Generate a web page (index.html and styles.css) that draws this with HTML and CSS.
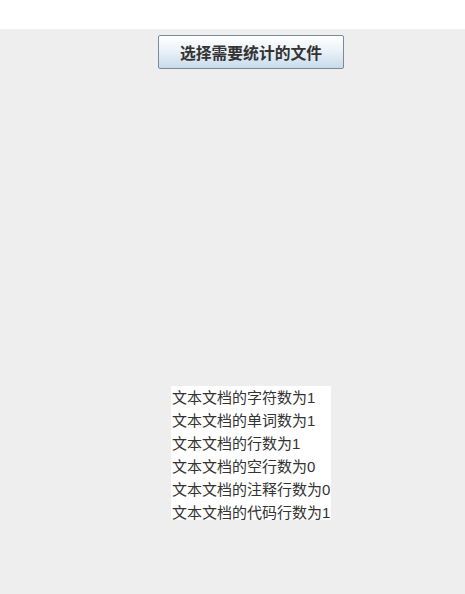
FILE: index.html
```html
<!DOCTYPE html>
<html lang="zh">
<head>
<meta charset="utf-8">
<link rel="stylesheet" href="styles.css">
</head>
<body>
<div class="titlebar"></div>
<div class="frame">
  <button class="choose">选择需要统计的文件</button>
  <div class="results">
    <div class="line">文本文档的字符数为1</div>
    <div class="line">文本文档的单词数为1</div>
    <div class="line">文本文档的行数为1</div>
    <div class="line">文本文档的空行数为0</div>
    <div class="line">文本文档的注释行数为0</div>
    <div class="line">文本文档的代码行数为1</div>
  </div>
</div>
</body>
</html>
```
FILE: styles.css
```css
html, body {
  margin: 0;
  padding: 0;
  background: #ffffff;
}
body {
  font-family: "Liberation Sans", "Noto Sans CJK SC", sans-serif;
  width: 465px;
  height: 594px;
  overflow: hidden;
}
.titlebar {
  height: 29px;
  background: #ffffff;
}
.frame {
  height: 565px;
  background: #eeeeee;
  display: flex;
  flex-direction: column;
  align-items: center;
  padding-left: 37px;
  box-sizing: border-box;
}
.choose {
  margin-top: 6px;
  width: 186px;
  height: 34px;
  border: 1px solid #7a8a99;
  border-radius: 2px;
  background: linear-gradient(to bottom, #ffffff 0%, #eef4f9 40%, #c8dbeb 100%);
  font-family: "Liberation Sans", "Noto Sans CJK SC", sans-serif;
  font-weight: bold;
  font-size: 15.8px;
  color: #333333;
  padding: 0;
}
.results {
  margin-top: 317px;
  width: 160px;
  height: 134px;
  background: #ffffff;
  display: flex;
  flex-direction: column;
  box-sizing: border-box;
}
.line {
  height: 23px;
  line-height: 23px;
  font-size: 15px;
  color: #333333;
  white-space: nowrap;
  padding-left: 1px;
}
```
